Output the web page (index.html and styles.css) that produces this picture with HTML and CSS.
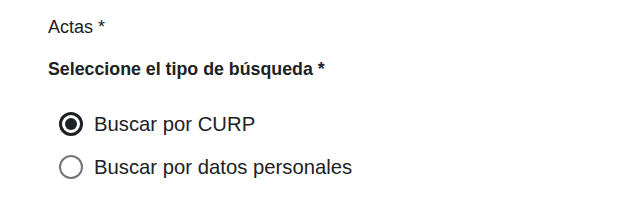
FILE: index.html
```html
<!DOCTYPE html>
<html>
<head>
    <title>Actas</title>
    <link rel="stylesheet" href="styles.css">
</head>
<body>
    <div class="form-section">
        <div class="section-title">Actas *</div>

        <div class="question">
            <div class="question-label">Seleccione el tipo de búsqueda *</div>

            <div class="options">
                <label class="option">
                    <span class="radio checked"><span class="dot"></span></span>
                    <span class="option-text">Buscar por CURP</span>
                </label>
                <label class="option">
                    <span class="radio"></span>
                    <span class="option-text">Buscar por datos personales</span>
                </label>
            </div>
        </div>
    </div>
</body>
</html>
```

FILE: styles.css
```css
body {
    margin: 0;
    background: #ffffff;
    font-family: "Liberation Sans", Arial, sans-serif;
    color: #202124;
}

.form-section {
    padding: 16px 0 0 48px;
}

.section-title {
    font-size: 18px;
    line-height: 22px;
}

.question {
    margin-top: 20px;
}

.question-label {
    font-size: 17.8px;
    font-weight: bold;
    line-height: 22px;
}

.options {
    margin-top: 32px;
    display: flex;
    flex-direction: column;
    gap: 19px;
}

.option {
    display: flex;
    align-items: center;
    gap: 11px;
    padding-left: 11px;
    font-size: 20.3px;
    line-height: 24px;
}

.radio {
    box-sizing: border-box;
    width: 24px;
    height: 24px;
    border: 2.5px solid #757575;
    border-radius: 50%;
    display: flex;
    align-items: center;
    justify-content: center;
}

.radio.checked {
    border: 3px solid #202124;
}

.dot {
    width: 12px;
    height: 12px;
    border-radius: 50%;
    background: #202124;
}
```
